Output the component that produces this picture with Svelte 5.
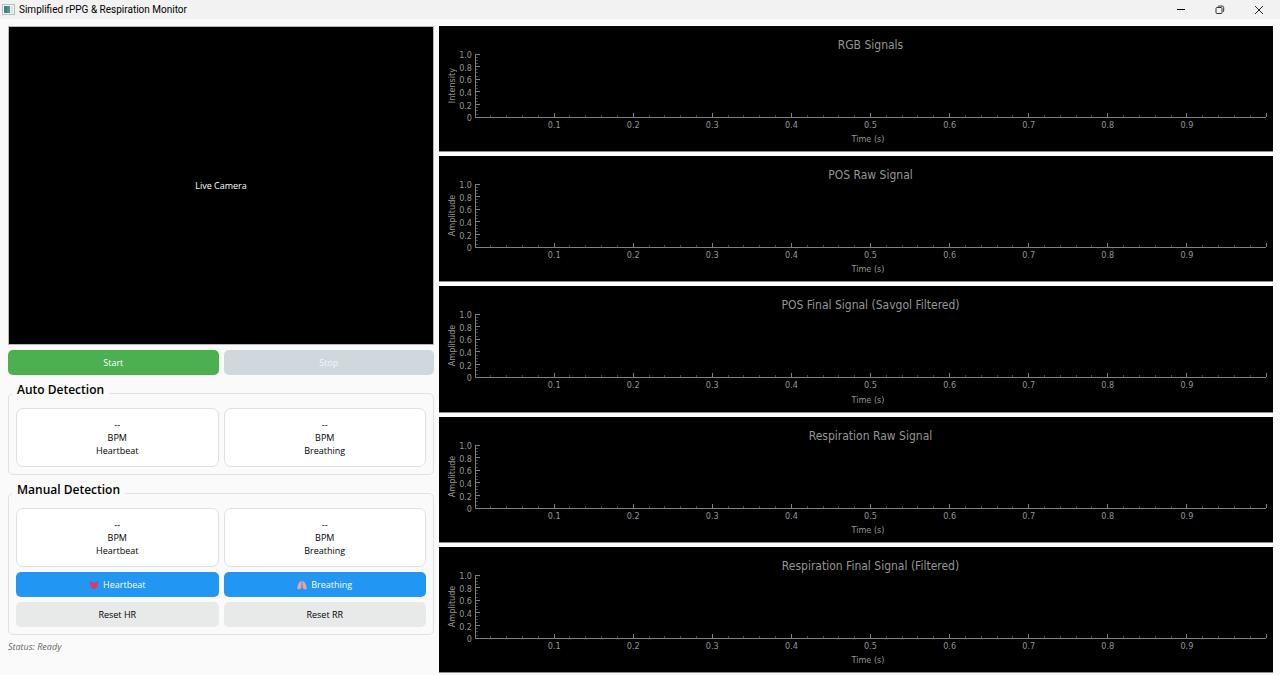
<script>
  const charts = [
    { title: 'RGB Signals', unit: 'Intensity' },
    { title: 'POS Raw Signal', unit: 'Amplitude' },
    { title: 'POS Final Signal (Savgol Filtered)', unit: 'Amplitude' },
    { title: 'Respiration Raw Signal', unit: 'Amplitude' },
    { title: 'Respiration Final Signal (Filtered)', unit: 'Amplitude' }
  ];
  const xMajor = [1, 2, 3, 4, 5, 6, 7, 8, 9];
  const xTicks = Array.from({ length: 51 }, (_, i) => ({ at: i * 2, major: i % 5 === 0 }));
  const yTicks = Array.from({ length: 21 }, (_, i) => ({ at: i * 5, major: i % 4 === 0 }));
  const yLabels = ['1.0', '0.8', '0.6', '0.4', '0.2', '0'];
</script>

{#snippet reading(name)}
  <div class="reading">
    <span>--</span>
    <span>BPM</span>
    <span>{name}</span>
  </div>
{/snippet}

<div class="window">
  <header class="titlebar">
    <svg class="app-icon" width="13" height="11" viewBox="0 0 13 11" aria-hidden="true">
      <rect x="0.5" y="0.5" width="12" height="10" fill="#f4f6f6" stroke="#b4bcbe" />
      <rect x="2" y="2" width="6" height="7" fill="#4d9389" />
      <rect x="2" y="2" width="3" height="7" fill="#3f7f86" />
      <rect x="9" y="2" width="2" height="7" fill="#d3e3dc" />
    </svg>
    <h1>Simplified rPPG &amp; Respiration Monitor</h1>
    <button class="win" aria-label="Minimize">
      <svg width="10" height="10" viewBox="0 0 10 10"><path d="M1 4.5h8" stroke="#000" /></svg>
    </button>
    <button class="win" aria-label="Restore">
      <svg width="10" height="10" viewBox="0 0 10 10" fill="none" stroke="#333">
        <rect x="1" y="2.5" width="6" height="6" rx="1" />
        <path d="M3 1.5 Q3 1 4 1 H7 Q8.7 1 8.7 2.7 V6 Q8.7 6.8 8 6.8" />
      </svg>
    </button>
    <button class="win" aria-label="Close">
      <svg width="10" height="10" viewBox="0 0 10 10"><path d="M1 1l8 8M9 1l-8 8" stroke="#222" /></svg>
    </button>
  </header>

  <main>
    <section class="controls">
      <div class="camera">Live Camera</div>
      <div class="pair run">
        <button class="btn start">Start</button>
        <button class="btn stop" disabled>Stop</button>
      </div>

      <section class="group">
        <h2>Auto Detection</h2>
        <div class="pair">
          {@render reading('Heartbeat')}
          {@render reading('Breathing')}
        </div>
      </section>

      <section class="group">
        <h2>Manual Detection</h2>
        <div class="pair">
          {@render reading('Heartbeat')}
          {@render reading('Breathing')}
          <button class="btn blue">
            <svg width="10" height="10" viewBox="0 0 10 10" aria-hidden="true">
              <path d="M5 9.2C3.2 8.6 1.3 6.8 1.2 4.4L.6 1.2 2.2 2 2.8 1 3.9 3.2h2.2L7.2 1 7.8 2 9.4 1.2 8.8 4.4C8.7 6.8 6.8 8.6 5 9.2z" fill="#e5356a" />
              <path d="M3.9 3.2h2.2" stroke="#a0488c" stroke-width=".8" />
            </svg>
            Heartbeat
          </button>
          <button class="btn blue">
            <svg width="10" height="10" viewBox="0 0 10 10" aria-hidden="true">
              <path d="M4.6 1.2C2.6 1 .4 4.6.4 8.2c0 1.4 1.4 1.3 2.6.7C4.2 8.4 4.4 7.8 4.4 6.4zM5.4 1.2C7.4 1 9.6 4.6 9.6 8.2c0 1.4-1.4 1.3-2.6.7C5.8 8.4 5.6 7.8 5.6 6.4z" fill="#f2a0a2" />
              <path d="M5 .6v3.2M5 3.8L3.6 5.4M5 3.8l1.4 1.6" fill="none" stroke="#d58f9c" stroke-width=".8" />
            </svg>
            Breathing
          </button>
          <button class="btn grey">Reset HR</button>
          <button class="btn grey">Reset RR</button>
        </div>
      </section>

      <p class="status">Status: Ready</p>
    </section>

    <section class="charts">
      {#each charts as chart}
        <figure>
          <figcaption>{chart.title}</figcaption>
          <div class="unit">{chart.unit}</div>
          <svg class="plot" role="img" aria-label={chart.title}>
            <g class="minor">
              {#each xTicks.filter((t) => !t.major) as t}
                <line x1="{t.at}%" x2="{t.at}%" y1="100%" y2="97%" />
              {/each}
              {#each yTicks.filter((t) => !t.major) as t}
                <line x1="0" x2="3" y1="{t.at}%" y2="{t.at}%" />
              {/each}
            </g>
            <g class="major">
              {#each xTicks.filter((t) => t.major) as t}
                <line x1="{t.at}%" x2="{t.at}%" y1="100%" y2="94%" />
              {/each}
              {#each yTicks.filter((t) => t.major) as t}
                <line x1="0" x2="5" y1="{t.at}%" y2="{t.at}%" />
              {/each}
              <line x1="0" x2="0" y1="0" y2="100%" />
              <line x1="0" x2="100%" y1="100%" y2="100%" />
            </g>
            {#each yLabels as label, i}
              <text x="-3" y="{i * 20}%" dy="4" text-anchor="end">{label}</text>
            {/each}
            {#each xMajor as n}
              <text x="{n * 10}%" y="100%" dy="11" text-anchor="middle">0.{n}</text>
            {/each}
          </svg>
          <div class="time">Time (s)</div>
        </figure>
      {/each}
    </section>
  </main>
</div>

<style>
  :global(body) {
    margin: 0;
    background: #fafafa;
  }
  .window {
    min-height: 100vh;
    display: flex;
    flex-direction: column;
    font: 9px/13px 'Open Sans', 'Noto Sans', sans-serif;
    color: #000;
    background: #fafafa;
  }
  .titlebar {
    display: flex;
    align-items: center;
    height: 19px;
    padding-left: 2px;
    background: #f2f2f2;
  }
  h1 {
    flex: 1;
    margin: 0 0 0 4px;
    font-family: Roboto, sans-serif;
    font-size: 10px;
    font-weight: 400;
  }
  .win {
    display: grid;
    place-items: center;
    width: 39px;
    height: 19px;
    padding: 0;
    border: 0;
    background: none;
  }
  .win:last-child {
    margin-right: 2px;
  }
  main {
    flex: 1;
    display: grid;
    grid-template-columns: 71fr 139fr;
    gap: 5px;
    padding: 7px 7px 2px 8px;
  }
  .controls {
    display: flex;
    flex-direction: column;
  }
  .camera {
    flex: 1;
    display: grid;
    place-items: center;
    box-sizing: border-box;
    border: 1px solid #b8b8b8;
    background: #000;
    color: #fff;
  }
  .pair {
    display: grid;
    grid-template-columns: 1fr 1fr;
    gap: 5px;
  }
  .run {
    margin-top: 5px;
  }
  .btn {
    display: flex;
    align-items: center;
    justify-content: center;
    gap: 4px;
    height: 25px;
    padding: 0;
    border: 0;
    border-radius: 5px;
    font: inherit;
    color: #fff;
  }
  .start {
    background: #4caf50;
  }
  .stop {
    background: #cfd8dd;
    color: #f4f6f7;
  }
  .blue {
    background: #2196f3;
  }
  .grey {
    background: #e8eaea;
    color: #000;
  }
  .group {
    margin-top: 18px;
    padding: 14px 7px 7px;
    border: 1px solid #e2e2e2;
    border-radius: 5px;
  }
  h2 {
    width: max-content;
    margin: -26px 0 10px -4px;
    padding: 0 5px;
    background: #fafafa;
    font-size: 12px;
    line-height: 16px;
    font-weight: 600;
  }
  .reading {
    display: flex;
    flex-direction: column;
    align-items: center;
    padding: 9px 0;
    border: 1px solid #e0e0e0;
    border-radius: 7px;
    background: #fff;
  }
  .status {
    margin: 5px 0 20px;
    font-style: italic;
    color: #666;
  }
  .charts {
    display: grid;
    grid-auto-rows: 1fr;
    gap: 4px;
    background: #fff;
  }
  figure {
    display: grid;
    grid-template: 28px 1fr 34px / 36px 1fr;
    box-sizing: border-box;
    margin: 0;
    padding-right: 7px;
    border-bottom: 1px solid #8c8c8c;
    background: #000;
    color: #969696;
    font-family: 'DejaVu Sans Condensed', 'DejaVu Sans', sans-serif;
  }
  figcaption {
    grid-column: 2;
    padding-top: 11px;
    text-align: center;
    font-size: 12px;
    line-height: 16px;
  }
  .unit {
    padding-right: 7px;
    writing-mode: vertical-rl;
    transform: rotate(180deg);
    text-align: center;
    white-space: nowrap;
  }
  .plot {
    width: 100%;
    height: 0;
    min-height: 100%;
    overflow: visible;
    shape-rendering: crispEdges;
  }
  .plot text {
    font-size: 9px;
    fill: #969696;
  }
  .major line {
    stroke: #808080;
  }
  .minor line {
    stroke: #444;
  }
  .time {
    grid-column: 2;
    padding: 16px 5px 0 0;
    text-align: center;
  }
</style>
